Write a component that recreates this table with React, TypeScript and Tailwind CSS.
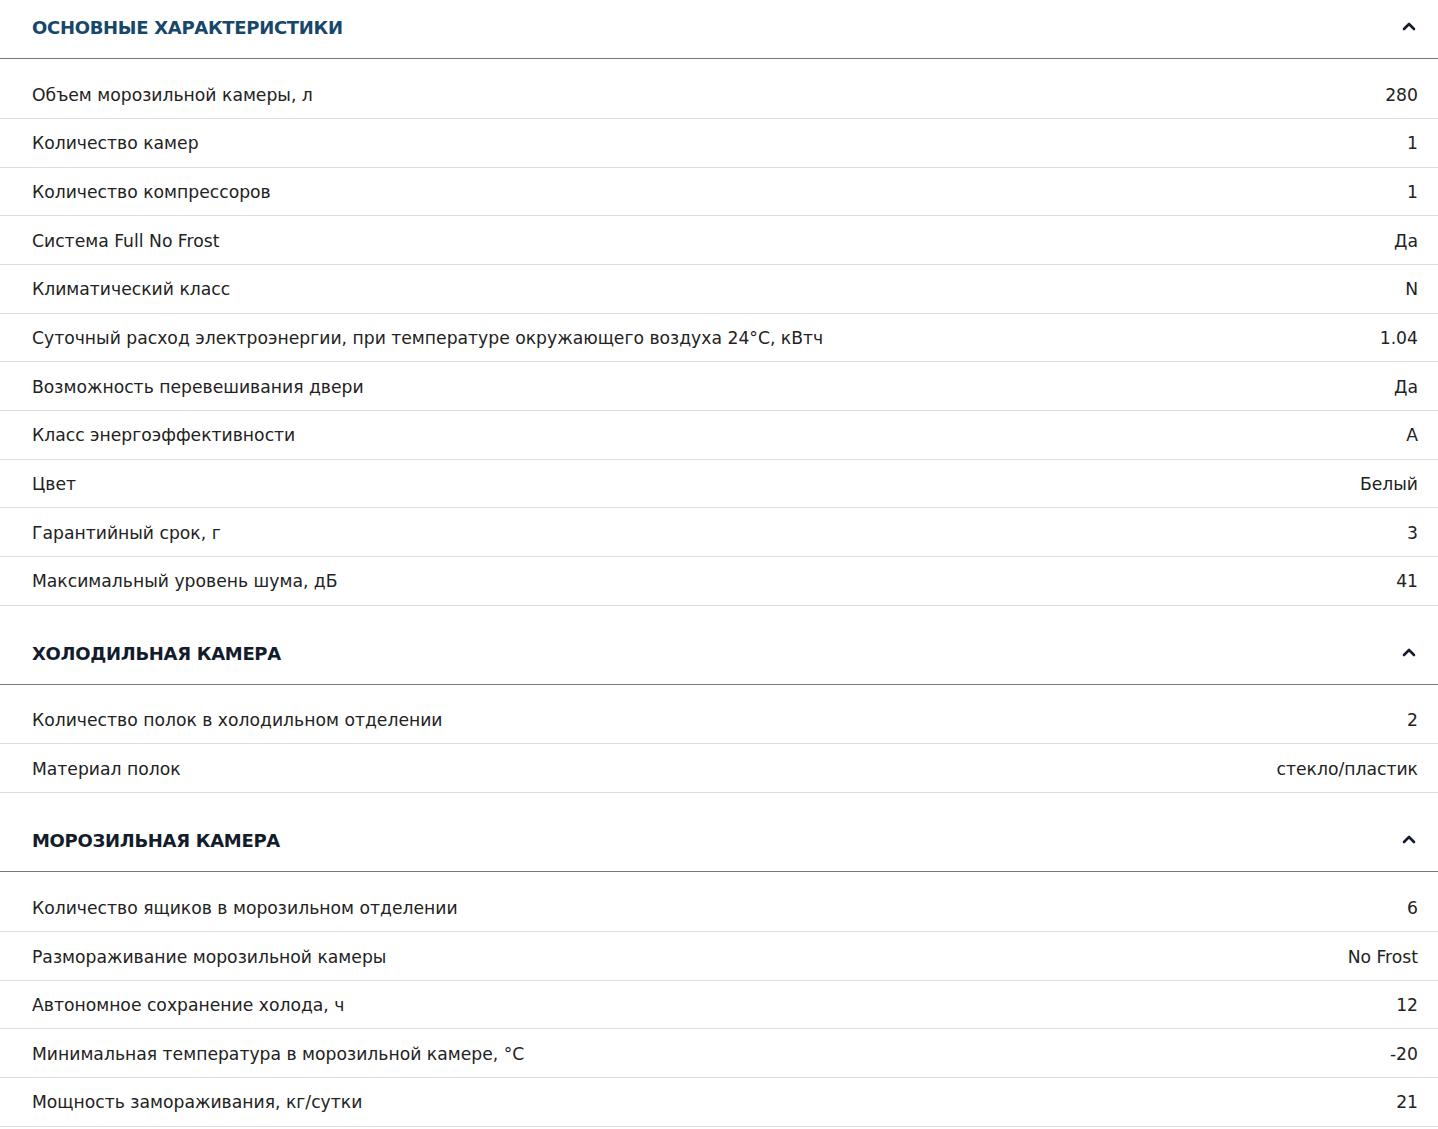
import React from "react";

type Section = { title: string; titleClass: string; rows: [string, string][] };

const sections: Section[] = [
  {
    title: "ОСНОВНЫЕ ХАРАКТЕРИСТИКИ",
    titleClass: "text-[#17476a]",
    rows: [
      ["Объем морозильной камеры, л", "280"],
      ["Количество камер", "1"],
      ["Количество компрессоров", "1"],
      ["Система Full No Frost", "Да"],
      ["Климатический класс", "N"],
      ["Суточный расход электроэнергии, при температуре окружающего воздуха 24°C, кВтч", "1.04"],
      ["Возможность перевешивания двери", "Да"],
      ["Класс энергоэффективности", "A"],
      ["Цвет", "Белый"],
      ["Гарантийный срок, г", "3"],
      ["Максимальный уровень шума, дБ", "41"],
    ],
  },
  {
    title: "ХОЛОДИЛЬНАЯ КАМЕРА",
    titleClass: "text-[#131c2b]",
    rows: [
      ["Количество полок в холодильном отделении", "2"],
      ["Материал полок", "стекло/пластик"],
    ],
  },
  {
    title: "МОРОЗИЛЬНАЯ КАМЕРА",
    titleClass: "text-[#131c2b]",
    rows: [
      ["Количество ящиков в морозильном отделении", "6"],
      ["Размораживание морозильной камеры", "No Frost"],
      ["Автономное сохранение холода, ч", "12"],
      ["Минимальная температура в морозильной камере, °C", "-20"],
      ["Мощность замораживания, кг/сутки", "21"],
    ],
  },
];

function Chevron() {
  return (
    <svg width="14" height="10" viewBox="0 0 14 10" className="text-[#131c2b]">
      <path d="M2 8 L7 3 L12 8" fill="none" stroke="currentColor" strokeWidth="2.6" strokeLinecap="round" strokeLinejoin="round" />
    </svg>
  );
}

export default function App() {
  return (
    <div className="w-[1438px] bg-white text-[#222] font-['DejaVu_Sans',sans-serif]">
      {sections.map((s, i) => (
        <div key={s.title} className={i === 0 ? "" : "mt-[20px]"}>
          <div className="h-[59px] border-b border-[#777] flex items-start justify-between pl-[32px] pr-[22px] pt-[14px]">
            <h2 className={`text-[18px] font-bold tracking-[-0.3px] leading-[28px] ${s.titleClass}`}>{s.title}</h2>
            <div className="pt-[7px]">
              <Chevron />
            </div>
          </div>
          <div className="pt-[11.3px]">
            {s.rows.map(([k, v]) => (
              <div key={k} className="h-[48.67px] border-b border-[#dedede] flex items-center justify-between pl-[32px] pr-[20px] text-[17.2px] pt-[3px]">
                <span>{k}</span>
                <span>{v}</span>
              </div>
            ))}
          </div>
        </div>
      ))}
    </div>
  );
}
